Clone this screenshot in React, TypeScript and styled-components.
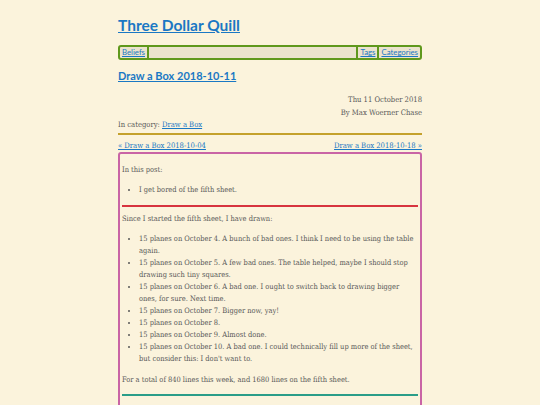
import { createGlobalStyle } from 'styled-components';
import styled from 'styled-components';

const GlobalStyle = createGlobalStyle`
  html, body {
    margin: 0;
    padding: 0;
    background: #fbf3dc;
  }
  body {
    font-family: 'DejaVu Serif Condensed', 'DejaVu Serif', serif;
    color: #595959;
  }
`;

const Page = styled.div`
  width: 304px;
  margin: 0 auto;
  padding-top: 14px;
`;

const SiteTitle = styled.h1`
  margin: 0 0 9px;
  font-family: Lato, 'Open Sans', sans-serif;
  font-weight: 700;
  font-size: 15.5px;
  line-height: 22px;
  a {
    color: #1a78c4;
  }
`;

const Nav = styled.nav`
  display: flex;
  align-items: stretch;
  height: 11px;
  border: 2px solid #5f981c;
  border-radius: 3px;
  background: #ebe3cd;
  font-family: Lato, 'Open Sans', sans-serif;
  font-size: 7.8px;
  line-height: 11px;
`;

const NavItem = styled.a<{ $edge?: 'left' | 'right' }>`
  color: #1a78c4;
  padding: 0 2px;
  ${(p) => (p.$edge === 'right' ? 'border-right: 2px solid #5f981c;' : 'border-left: 2px solid #5f981c;')}
`;

const NavSpacer = styled.div`
  flex: 1;
`;

const PostTitle = styled.h2`
  margin: 8px 0 9px;
  font-family: Lato, 'Open Sans', sans-serif;
  font-weight: 700;
  font-size: 11px;
  line-height: 16px;
  a {
    color: #1a78c4;
  }
`;

const Meta = styled.div`
  text-align: right;
  font-size: 7.6px;
  line-height: 13px;
`;

const Category = styled.div`
  font-size: 7.6px;
  line-height: 12px;
  padding-bottom: 2px;
  border-bottom: 2px solid #c4a12c;
  a {
    color: #1a78c4;
  }
`;

const PrevNext = styled.div`
  display: flex;
  justify-content: space-between;
  font-size: 7.6px;
  line-height: 12px;
  margin: 5px 0 0;
  a {
    color: #1a78c4;
  }
`;

const Body = styled.article`
  border: 2px solid #c964a5;
  border-radius: 3px;
  padding: 4px 2px 20px;
  font-size: 7.45px;
  line-height: 12px;
`;

const Para = styled.p`
  margin: 6px 0;
`;

const List = styled.ul`
  margin: 8px 0 9px;
  padding-left: 17px;
`;

const Rule = styled.hr<{ $color: string }>`
  margin: 8px 0 6px;
  border: none;
  height: 2px;
  background: ${(p) => p.$color};
`;

const items = [
  '15 planes on October 4. A bunch of bad ones. I think I need to be using the table again.',
  '15 planes on October 5. A few bad ones. The table helped, maybe I should stop drawing such tiny squares.',
  '15 planes on October 6. A bad one. I ought to switch back to drawing bigger ones, for sure. Next time.',
  '15 planes on October 7. Bigger now, yay!',
  '15 planes on October 8.',
  '15 planes on October 9. Almost done.',
  "15 planes on October 10. A bad one. I could technically fill up more of the sheet, but consider this: I don't want to.",
];

const App = () => {
  return (
    <Page>
      <GlobalStyle />
      <SiteTitle>
        <a href='#'>Three Dollar Quill</a>
      </SiteTitle>
      <Nav>
        <NavItem href='#' $edge='right'>
          Beliefs
        </NavItem>
        <NavSpacer />
        <NavItem href='#'>Tags</NavItem>
        <NavItem href='#'>Categories</NavItem>
      </Nav>
      <PostTitle>
        <a href='#'>Draw a Box 2018-10-11</a>
      </PostTitle>
      <Meta>
        <div>Thu 11 October 2018</div>
        <div>By Max Woerner Chase</div>
      </Meta>
      <Category>
        In category: <a href='#'>Draw a Box</a>
      </Category>
      <PrevNext>
        <a href='#'>« Draw a Box 2018-10-04</a>
        <a href='#'>Draw a Box 2018-10-18 »</a>
      </PrevNext>
      <Body>
        <Para>In this post:</Para>
        <List>
          <li>I get bored of the fifth sheet.</li>
        </List>
        <Rule $color='#d7343f' />
        <Para>Since I started the fifth sheet, I have drawn:</Para>
        <List>
          {items.map((item) => (
            <li key={item}>{item}</li>
          ))}
        </List>
        <Para>For a total of 840 lines this week, and 1680 lines on the fifth sheet.</Para>
        <Rule $color='#2a9d88' />
      </Body>
    </Page>
  );
};

export default App;
